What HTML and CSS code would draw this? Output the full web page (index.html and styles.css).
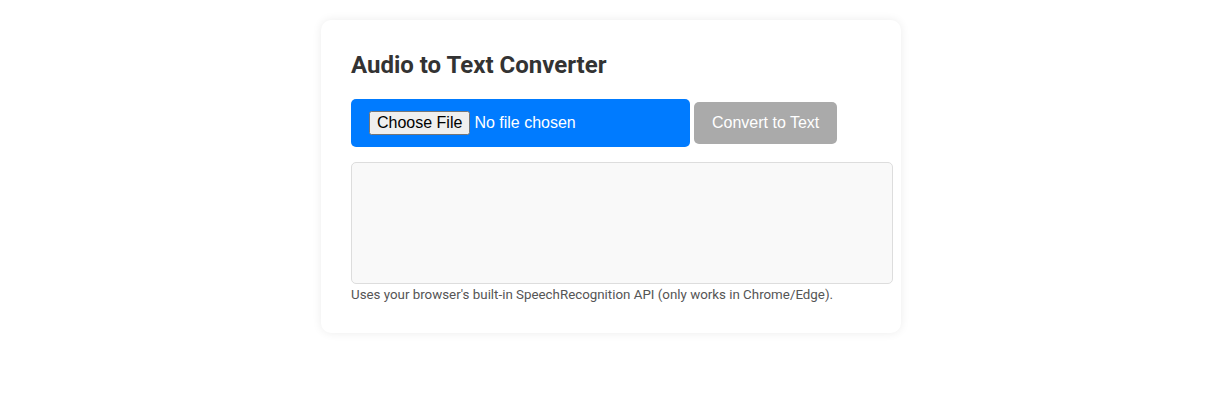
FILE: index.html
```html
<!DOCTYPE html>
<html lang="en">
<head>
    <meta charset="UTF-8">
    <meta name="viewport" content="width=device-width, initial-scale=1.0">
    <title>Audio to Text Converter</title>
    <link rel="stylesheet" href="styles.css">
</head>
<body>
    <div class="card">
        <h2>Audio to Text Converter</h2>
        <div class="controls">
            <input type="file" id="audioFile" accept="audio/*">
            <button id="convertBtn" disabled>Convert to Text</button>
        </div>
        <textarea id="output" readonly></textarea>
        <p class="note">Uses your browser's built-in SpeechRecognition API (only works in Chrome/Edge).</p>
    </div>
</body>
</html>
```

FILE: styles.css
```css
body {
    margin: 0;
    padding: 20px;
    background: #fff;
    font-family: Roboto, 'Noto Sans', sans-serif;
}
.card {
    width: 520px;
    margin: 0 auto;
    padding: 31px 30px 31px;
    background: #fff;
    border-radius: 10px;
    box-shadow: 0 0 10px rgba(0,0,0,0.08);
}
.card h2 {
    margin: 0 0 20px;
    font-size: 24px;
    color: #333;
}
.controls {
    display: flex;
    align-items: center;
    gap: 4px;
}
input[type="file"] {
    padding: 12px 18px;
    background: #007bff;
    color: #fff;
    border-radius: 5px;
    font-family: 'Liberation Sans', Arial, sans-serif;
    font-size: 16px;
    width: 303px;
}
button {
    padding: 12px 18px;
    background: #aaa;
    color: #fff;
    border: none;
    border-radius: 5px;
    font-family: 'Liberation Sans', Arial, sans-serif;
    font-size: 16px;
}
textarea {
    display: block;
    width: 100%;
    height: 100px;
    margin-top: 15px;
    padding: 10px;
    background: #f9f9f9;
    border: 1px solid #ddd;
    border-radius: 5px;
    resize: none;
}
.note {
    margin: 3px 0 0;
    font-size: 13.33px;
    color: #555;
}
```
